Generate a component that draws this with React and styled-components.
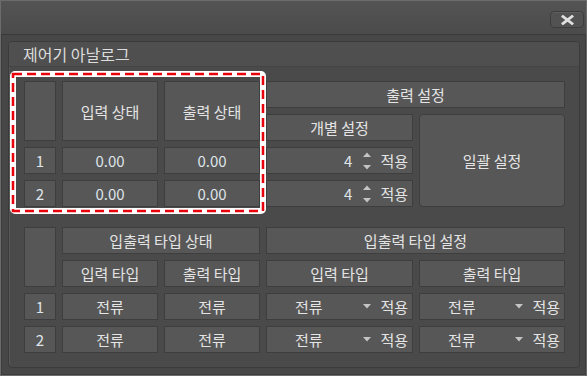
import React from "react";
import styled, { createGlobalStyle } from "styled-components";

const GlobalStyle = createGlobalStyle`
  html, body {
    margin: 0;
    padding: 0;
    background: #474747;
  }
  body {
    font-family: "Noto Sans CJK KR", "Noto Sans", sans-serif;
    color: #e2e2e2;
  }
`;

const Window = styled.div`
  box-sizing: border-box;
  width: 587px;
  height: 376px;
  display: flex;
  flex-direction: column;
  background: #474747;
  border: 1px solid #6c6c6c;
  box-shadow: inset 0 0 0 1px #3c3c3c;
`;

const TitleBar = styled.div`
  height: 34px;
  flex: none;
  display: flex;
  justify-content: flex-end;
  align-items: flex-start;
  padding: 10px 2px 0 0;
  box-sizing: border-box;
  background: linear-gradient(#545454, #4b4b4b);
  border-bottom: 1px solid #393939;
`;

const CloseButton = styled.button`
  width: 34px;
  height: 17px;
  padding: 0;
  display: flex;
  align-items: center;
  justify-content: center;
  background: #525252;
  border: 1px solid #3d3d3d;
  border-radius: 4px;
  box-shadow: inset 0 1px 0 #5e5e5e;
  cursor: pointer;
`;

const Body = styled.div`
  flex: 1;
  padding: 6px 6px 0 7px;
`;

const Panel = styled.div`
  position: relative;
  box-sizing: border-box;
  width: 572px;
  height: 327px;
  background: #4a4a4a;
  border: 1px solid #3b3b3b;
  border-radius: 4px;
  box-shadow: inset 1px 1px 0 #575757;
`;

const PanelHeader = styled.div`
  height: 24px;
  display: flex;
  align-items: center;
  padding-left: 14px;
  background: #4f4f4f;
  border-bottom: 1px solid #444;
  border-radius: 3px 3px 0 0;
  font-size: 16px;
  color: #dcdcdc;
`;

const PanelBody = styled.div`
  display: flex;
  flex-direction: column;
  gap: 20px;
  padding: 14px 14px 0 15px;
`;

const Grid = styled.div`
  display: grid;
  grid-template-columns: 32px 96px 96px 147px 146px;
  grid-auto-rows: 27px;
  gap: 6px;
`;

const Cell = styled.div`
  box-sizing: border-box;
  grid-column: span ${(p) => p.$cols || 1};
  grid-row: span ${(p) => p.$rows || 1};
  display: flex;
  align-items: center;
  justify-content: center;
  background: #575757;
  border: 1px solid #3e3e3e;
  border-radius: ${(p) => (p.$button ? "4px" : "0")};
  font-size: 15px;
  line-height: 17px;
  color: #e4e4e4;
  white-space: nowrap;
`;

const Num = styled.span`
  color: #dfe4ea;
`;

const InputCell = styled(Cell)`
  justify-content: flex-end;
  padding-right: 4px;
`;

const SpinValue = styled.span`
  color: #dfe4ea;
  margin-right: 11px;
`;

const Spinner = styled.div`
  width: 8px;
  height: 18px;
  display: flex;
  flex-direction: column;
  justify-content: space-between;
  margin-right: 9px;
`;

const ComboText = styled.span`
  flex: 1;
  padding-left: 28px;
  text-align: left;
`;

const Apply = styled.span`
  color: #e4e4e4;
`;

const Arrow = styled.svg`
  display: block;
  margin-right: ${(p) => p.$gap || 0}px;
`;

const Highlight = styled.svg`
  position: absolute;
  left: 1px;
  top: 29px;
  pointer-events: none;
`;

const Tri = ({ down, gap }) => (
  <Arrow width="8" height="5" viewBox="0 0 8 5" $gap={gap}>
    {down ? (
      <polygon points="0,0 8,0 4,4.5" fill="#c4c4c4" />
    ) : (
      <polygon points="0,5 8,5 4,0.5" fill="#c4c4c4" />
    )}
  </Arrow>
);

const SpinInput = ({ value }) => (
  <InputCell>
    <SpinValue>{value}</SpinValue>
    <Spinner>
      <Tri />
      <Tri down />
    </Spinner>
    <Apply>적용</Apply>
  </InputCell>
);

const Combo = ({ value }) => (
  <InputCell>
    <ComboText>{value}</ComboText>
    <Tri down gap={9} />
    <Apply>적용</Apply>
  </InputCell>
);

const App = () => {
  return (
    <>
      <GlobalStyle />
      <Window>
        <TitleBar>
          <CloseButton aria-label="close">
            <svg width="13" height="10" viewBox="0 0 13 10">
              <path
                d="M2 1.5 L11 8.5 M11 1.5 L2 8.5"
                stroke="#e0e0e0"
                strokeWidth="2.8"
                strokeLinecap="square"
              />
            </svg>
          </CloseButton>
        </TitleBar>
        <Body>
          <Panel>
            <PanelHeader>제어기 아날로그</PanelHeader>
            <PanelBody>
              <Grid>
                <Cell $rows={2} />
                <Cell $rows={2}>입력 상태</Cell>
                <Cell $rows={2}>출력 상태</Cell>
                <Cell $cols={2}>출력 설정</Cell>
                <Cell>개별 설정</Cell>
                <Cell $rows={3} $button>
                  일괄 설정
                </Cell>
                <Cell>
                  <Num>1</Num>
                </Cell>
                <Cell>
                  <Num>0.00</Num>
                </Cell>
                <Cell>
                  <Num>0.00</Num>
                </Cell>
                <SpinInput value="4" />
                <Cell>
                  <Num>2</Num>
                </Cell>
                <Cell>
                  <Num>0.00</Num>
                </Cell>
                <Cell>
                  <Num>0.00</Num>
                </Cell>
                <SpinInput value="4" />
              </Grid>

              <Grid>
                <Cell $rows={2} />
                <Cell $cols={2}>입출력 타입 상태</Cell>
                <Cell $cols={2}>입출력 타입 설정</Cell>
                <Cell>입력 타입</Cell>
                <Cell>출력 타입</Cell>
                <Cell>입력 타입</Cell>
                <Cell>출력 타입</Cell>
                {["1", "2"].map((n) => (
                  <React.Fragment key={n}>
                    <Cell>
                      <Num>{n}</Num>
                    </Cell>
                    <Cell>전류</Cell>
                    <Cell>전류</Cell>
                    <Combo value="전류" />
                    <Combo value="전류" />
                  </React.Fragment>
                ))}
              </Grid>
            </PanelBody>

            <Highlight width="256" height="143" viewBox="0 0 256 143">
              <rect
                x="3"
                y="3"
                width="250"
                height="137"
                rx="2"
                fill="none"
                stroke="#ffffff"
                strokeWidth="6"
              />
              <rect
                x="3"
                y="3"
                width="250"
                height="137"
                fill="none"
                stroke="#e8000b"
                strokeWidth="2.5"
                strokeDasharray="9 5"
              />
            </Highlight>
          </Panel>
        </Body>
      </Window>
    </>
  );
};

export default App;
